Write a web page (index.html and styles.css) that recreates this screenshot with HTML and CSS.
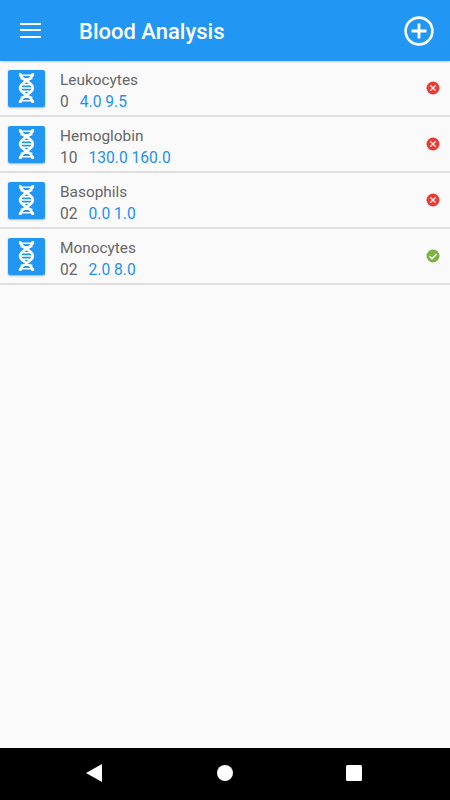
FILE: index.html
```html
<!DOCTYPE html>
<html lang="en">
<head>
  <meta charset="UTF-8" />
  <meta name="viewport" content="width=device-width, initial-scale=1.0" />
  <title>Blood Analysis</title>
  <link rel="stylesheet" href="styles.css">
</head>
<body>
  <svg class="defs" width="0" height="0" aria-hidden="true">
    <symbol id="dna" viewBox="0 0 16 28">
      <path d="M2 0C2 7 14 8 14 14S2 21 2 28M14 0C14 7 2 8 2 14S14 21 14 28" fill="none" stroke="#fff" stroke-width="2.600"/>
      <path d="M1 2h14M2.500 5.200h11M5 11h6M3 14h10M5 17h6M2.500 22.800h11M1 26h14" fill="none" stroke="#fff" stroke-width="1.400"/>
    </symbol>
    <symbol id="bad" viewBox="0 0 14 14">
      <circle cx="7" cy="7" r="6.500" fill="#ea3a33"/>
      <path d="M4.200 4.200l5.600 5.600M9.800 4.200l-5.600 5.600" stroke="#fdecea" stroke-width="1.300" fill="none"/>
    </symbol>
    <symbol id="good" viewBox="0 0 14 14">
      <circle cx="7" cy="7" r="6.500" fill="#7cb342"/>
      <path d="M3.500 7.300l2.500 2.400 4.600-4.800" stroke="#fff" stroke-width="1.500" fill="none"/>
    </symbol>
  </svg>

  <header class="toolbar">
    <button class="menu-btn" aria-label="Menu">
      <span></span><span></span><span></span>
    </button>
    <h1>Blood Analysis</h1>
    <svg class="add-icon" width="30" height="30" viewBox="0 0 30 30" aria-label="Add">
      <circle cx="15" cy="15" r="13.400" fill="none" stroke="#fff" stroke-width="2.600"/>
      <path d="M15 7.500v15M7.500 15h15" stroke="#fff" stroke-width="2.800" fill="none"/>
    </svg>
  </header>

  <main class="list">
    <div class="row">
      <div class="thumb"><svg width="17" height="30"><use href="#dna"/></svg></div>
      <div class="info">
        <div class="name">Leukocytes</div>
        <div class="values"><span class="result">0</span><span class="range">4.0 9.5</span></div>
      </div>
      <svg class="status" width="14" height="14"><use href="#bad"/></svg>
    </div>
    <div class="row">
      <div class="thumb"><svg width="17" height="30"><use href="#dna"/></svg></div>
      <div class="info">
        <div class="name">Hemoglobin</div>
        <div class="values"><span class="result">10</span><span class="range">130.0 160.0</span></div>
      </div>
      <svg class="status" width="14" height="14"><use href="#bad"/></svg>
    </div>
    <div class="row">
      <div class="thumb"><svg width="17" height="30"><use href="#dna"/></svg></div>
      <div class="info">
        <div class="name">Basophils</div>
        <div class="values"><span class="result">02</span><span class="range">0.0 1.0</span></div>
      </div>
      <svg class="status" width="14" height="14"><use href="#bad"/></svg>
    </div>
    <div class="row">
      <div class="thumb"><svg width="17" height="30"><use href="#dna"/></svg></div>
      <div class="info">
        <div class="name">Monocytes</div>
        <div class="values"><span class="result">02</span><span class="range">2.0 8.0</span></div>
      </div>
      <svg class="status" width="14" height="14"><use href="#good"/></svg>
    </div>
  </main>

  <nav class="navbar">
    <svg width="18" height="18" viewBox="0 0 18 18"><path d="M16 0v18L0 9z" fill="#fff"/></svg>
    <svg width="18" height="18" viewBox="0 0 18 18"><circle cx="9" cy="9" r="8" fill="#fff"/></svg>
    <svg width="18" height="18" viewBox="0 0 18 18"><rect x="1" y="1" width="16" height="16" rx="1.500" fill="#fff"/></svg>
  </nav>
</body>
</html>
```

FILE: styles.css
```css
* {
  box-sizing: border-box;
}

html,
body {
  height: 100%;
}

body {
  font-family: Roboto, sans-serif;
  background-color: #fafafa;
  margin: 0;
  height: 800px;
  display: flex;
  flex-direction: column;
  overflow: hidden;
}

.defs {
  position: absolute;
}

.toolbar {
  height: 61px;
  flex: none;
  background-color: #2196f3;
  display: flex;
  align-items: center;
  padding: 0 16px 0 20px;
  box-shadow: 0 1px 2px rgba(0, 0, 0, 0.2);
}

.menu-btn {
  width: 21px;
  height: 15px;
  padding: 0;
  border: none;
  background: none;
  display: flex;
  flex-direction: column;
  justify-content: space-between;
  margin-bottom: 1px;
}

.menu-btn span {
  display: block;
  height: 2px;
  background-color: #fff;
}

.toolbar h1 {
  flex: 1;
  margin: 2px 0 0 38px;
  color: #fff;
  font-size: 22px;
  font-weight: 500;
}

.list {
  flex: 1;
}

.row {
  height: 56px;
  display: flex;
  align-items: center;
  padding: 0 10px 0 8px;
  border-bottom: 2px solid #e0e0e0;
}

.thumb {
  width: 37px;
  height: 37px;
  background-color: #2196f3;
  border-radius: 2px;
  box-shadow: 0 1px 2px rgba(0, 0, 0, 0.3);
  display: flex;
  align-items: center;
  justify-content: center;
}

.info {
  flex: 1;
  margin-left: 15px;
  padding-top: 6px;
}

.name {
  color: #666;
  font-size: 15.4px;
  line-height: 20px;
}

.values {
  display: flex;
  font-size: 15.6px;
  line-height: 21px;
  margin-top: 2px;
}

.result {
  color: #666;
  margin-right: 11px;
}

.range {
  color: #1e90f0;
}

.navbar {
  height: 52px;
  flex: none;
  background-color: #000;
  display: flex;
  justify-content: space-between;
  padding: 0 87px 2px 86px;
  align-items: center;
}
```
